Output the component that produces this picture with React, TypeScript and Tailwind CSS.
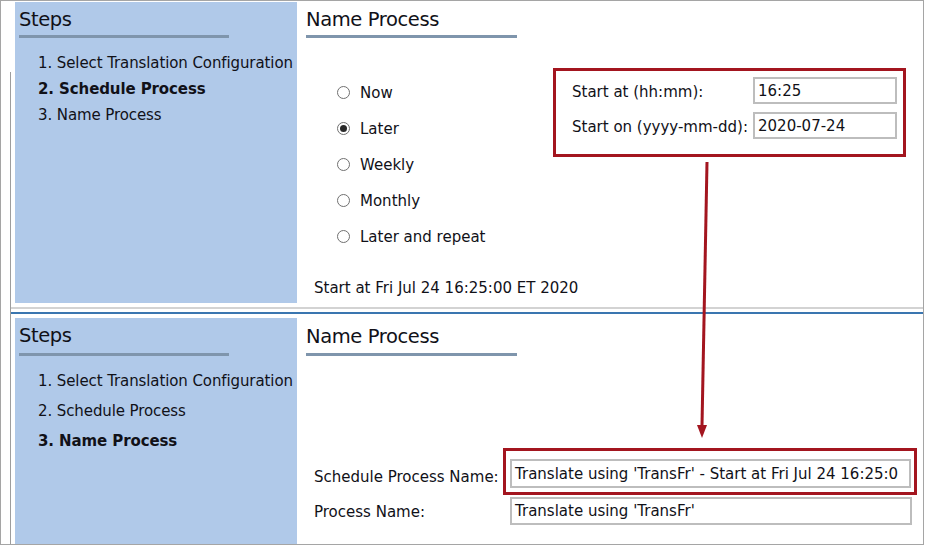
const steps = ["Select Translation Configuration", "Schedule Process", "Name Process"];

function Sidebar({ active, pad, gap, listGap, row }: { active: number; pad: string; gap: string; listGap: string; row: string }) {
  return (
    <div className={`w-[282px] shrink-0 bg-[#b0c9e9] ${pad}`}>
      <div className="pl-[4px] text-[19.5px] leading-[24px] tracking-[-0.4px]">Steps</div>
      <div className={`ml-[4px] h-[3px] w-[210px] bg-[#7f95ac] ${gap}`} />
      <ol className={`pl-[23px] tracking-[-0.1px] ${listGap}`}>
        {steps.map((s, i) => (
          <li key={s} className={`${row} ${i === active ? "font-bold" : ""}`}>
            {i + 1}. {s}
          </li>
        ))}
      </ol>
    </div>
  );
}

function Heading({ pad, gap }: { pad: string; gap: string }) {
  return (
    <div className={pad}>
      <div className="text-[19.5px] leading-[24px] tracking-[-0.4px]">Name Process</div>
      <div className={`h-[3px] w-[211px] bg-[#7f95ac] ${gap}`} />
    </div>
  );
}

function Radio({ label, checked }: { label: string; checked?: boolean }) {
  return (
    <div className="flex h-[36px] items-center gap-[10px]">
      <span className="flex h-[13px] w-[13px] items-center justify-center rounded-full border border-[#707070] bg-white">
        {checked && <span className="h-[7px] w-[7px] rounded-full bg-[#2a2a2a]" />}
      </span>
      <span className="pt-[2px]">{label}</span>
    </div>
  );
}

function Field({ value, className }: { value: string; className: string }) {
  return (
    <div className={`overflow-hidden whitespace-nowrap border-2 border-[#bdbdbd] bg-white pl-[3px] ${className}`}>
      {value}
    </div>
  );
}

export default function App() {
  return (
    <div className="relative flex h-[545px] w-[924px] flex-col border border-[#a5a5a5] bg-white font-['DejaVu_Sans',Verdana,sans-serif] text-[15px] text-[#111118]">
      {/* first screen: schedule step */}
      <div className="mt-[1px] flex h-[301px]">
        <div className="w-[14px] shrink-0 pl-[9px] pt-[70px]">
          <div className="h-full w-px bg-[#9d9d9d]" />
        </div>
        <Sidebar active={1} pad="pt-[6px]" gap="mt-[3px]" listGap="mt-[12px]" row="leading-[26px]" />
        <div className="flex-1 pl-[9px]">
          <Heading pad="pt-[6px]" gap="mt-[3px]" />
          <div className="mt-[30px] flex items-start">
            <div className="ml-[31px] w-[216px] pt-[6px] leading-[20px]">
              <Radio label="Now" />
              <Radio label="Later" checked />
              <Radio label="Weekly" />
              <Radio label="Monthly" />
              <Radio label="Later and repeat" />
            </div>
            <div className="flex w-[353px] flex-col gap-[8px] border-[3px] border-[#a3151f] pb-[15px] pl-[16px] pr-[6px] pt-[6px]">
              <div className="flex items-center justify-between">
                <span className="pt-[4px]">Start at (hh:mm):</span>
                <Field value="16:25" className="h-[27px] w-[144px] pt-[1px] leading-[22px]" />
              </div>
              <div className="flex items-center justify-between">
                <span className="pt-[4px]">Start on (yyyy-mm-dd):</span>
                <Field value="2020-07-24" className="h-[27px] w-[144px] pt-[1px] leading-[22px]" />
              </div>
            </div>
          </div>
          <div className="ml-[8px] mt-[24px] leading-[20px]">Start at Fri Jul 24 16:25:00 ET 2020</div>
        </div>
      </div>

      {/* divider between the two screens */}
      <div className="flex h-[15px]">
        <div className="w-[9px] shrink-0" />
        <div className="flex-1 border-l border-[#9d9d9d] pt-[4px]">
          <div className="h-[2px] bg-[#d3d3d3]" />
          <div className="mt-[3px] h-[2px] bg-[#3a76b0]" />
        </div>
      </div>

      {/* second screen: name step */}
      <div className="flex flex-1">
        <div className="w-[14px] shrink-0 pl-[9px]">
          <div className="h-full w-px bg-[#9d9d9d]" />
        </div>
        <Sidebar active={2} pad="pt-[6px]" gap="mt-[5px]" listGap="mt-[10px]" row="leading-[30px]" />
        <div className="flex-1 pl-[9px]">
          <Heading pad="pt-[7px]" gap="mt-[4px]" />
          <div className="mt-[92px]">
            <div className="flex items-center">
              <span className="w-[197px] pl-[8px] pt-[12px]">Schedule Process Name:</span>
              <div className="w-[414px] border-[3px] border-[#a3151f] pb-[4px] pl-[4px] pr-[3px] pt-[8px]">
                <Field
                  value="Translate using 'TransFr' - Start at Fri Jul 24 16:25:0"
                  className="h-[29px] w-full pt-[1px] leading-[24px]"
                />
              </div>
            </div>
            <div className="mt-[2px] flex items-center">
              <span className="w-[197px] pl-[8px] pt-[3px]">Process Name:</span>
              <Field value="Translate using 'TransFr'" className="ml-[7px] h-[28px] w-[402px] pt-[1px] leading-[23px]" />
            </div>
          </div>
        </div>
      </div>

      {/* annotation arrow */}
      <svg className="pointer-events-none absolute left-[-1px] top-[-1px] h-[545px] w-[924px]" viewBox="0 0 924 545">
        <line x1="707" y1="162" x2="702" y2="426" stroke="#a3151f" strokeWidth="3" />
        <polygon points="697,425 707,425 702,438" fill="#a3151f" />
      </svg>
    </div>
  );
}
